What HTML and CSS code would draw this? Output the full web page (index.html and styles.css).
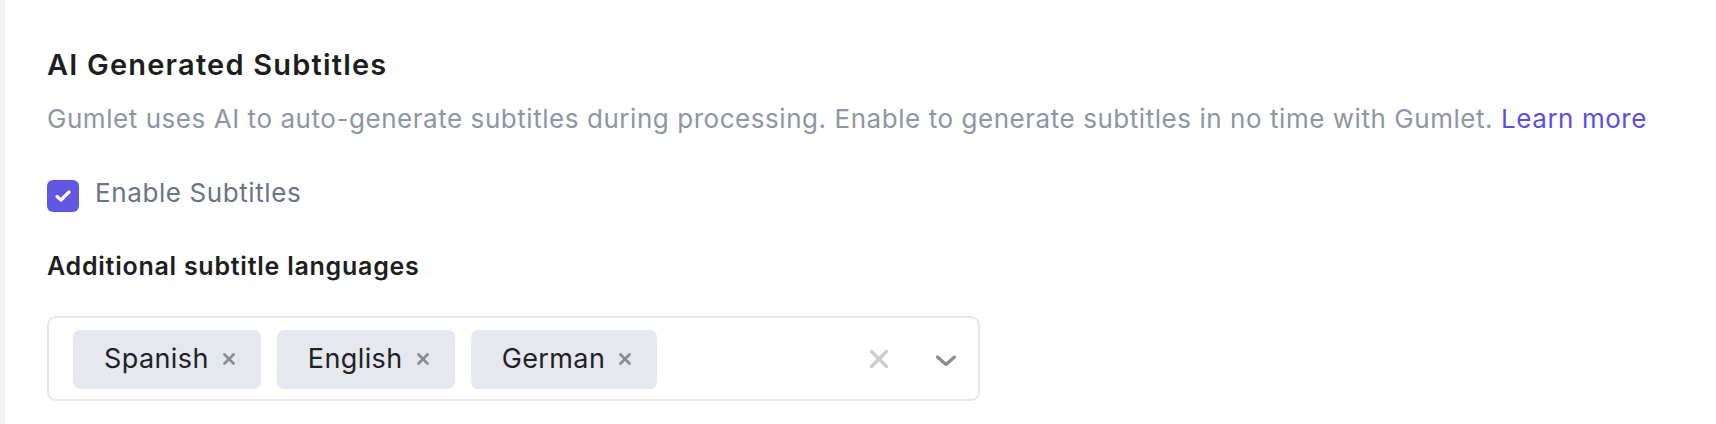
FILE: index.html
```html
<!DOCTYPE html>
<html lang="en">
<head>
<meta charset="utf-8">
<title>AI Generated Subtitles</title>
<link rel="stylesheet" href="styles.css">
</head>
<body>
<div class="page">
  <div class="rail"></div>
  <section class="panel">
    <h2 class="title">AI Generated Subtitles</h2>
    <p class="desc">Gumlet uses AI to auto-generate subtitles during processing. Enable to generate subtitles in no time with Gumlet. <a class="link" href="#">Learn more</a></p>
    <label class="check">
      <span class="box">
        <svg width="18" height="14" viewBox="0 0 18 14"><path d="M3 7.5 L7 11 L15 3" fill="none" stroke="#fff" stroke-width="3.2" stroke-linecap="round" stroke-linejoin="round"/></svg>
      </span>
      <span class="check-label">Enable Subtitles</span>
    </label>
    <h3 class="subhead">Additional subtitle languages</h3>
    <div class="select">
      <div class="values">
        <span class="chip"><span class="chip-text">Spanish</span><svg class="chip-x" width="14" height="14" viewBox="0 0 14 14"><path d="M2.5 2.5 L11.5 11.5 M11.5 2.5 L2.5 11.5" stroke="#8a8d92" stroke-width="2.8" stroke-linecap="round"/></svg></span>
        <span class="chip"><span class="chip-text">English</span><svg class="chip-x" width="14" height="14" viewBox="0 0 14 14"><path d="M2.5 2.5 L11.5 11.5 M11.5 2.5 L2.5 11.5" stroke="#8a8d92" stroke-width="2.8" stroke-linecap="round"/></svg></span>
        <span class="chip"><span class="chip-text">German</span><svg class="chip-x" width="14" height="14" viewBox="0 0 14 14"><path d="M2.5 2.5 L11.5 11.5 M11.5 2.5 L2.5 11.5" stroke="#8a8d92" stroke-width="2.8" stroke-linecap="round"/></svg></span>
      </div>
      <div class="indicators">
        <svg class="clear" width="20" height="20" viewBox="0 0 20 20"><path d="M2.5 2.5 L17.5 17.5 M17.5 2.5 L2.5 17.5" stroke="#cccccc" stroke-width="3.4" stroke-linecap="round"/></svg>
        <svg class="chev" width="22" height="14" viewBox="0 0 22 14"><path d="M2.5 3 L11 10.5 L19.5 3" fill="none" stroke="#8c8c8c" stroke-width="3.2" stroke-linecap="round" stroke-linejoin="round"/></svg>
      </div>
    </div>
  </section>
</div>
</body>
</html>
```

FILE: styles.css
```css
html, body {
  margin: 0;
  padding: 0;
  background: #ffffff;
}

body {
  font-family: Inter, "Noto Sans", "Liberation Sans", sans-serif;
}

.page {
  display: flex;
  min-height: 424px;
}

.rail {
  width: 4px;
  flex: 0 0 4px;
  background: #f3f4f7;
  border-right: 1px solid #eceef2;
}

.panel {
  flex: 1;
  padding: 49px 0 0 42px;
}

.title {
  margin: 0;
  font-size: 29px;
  line-height: 32px;
  font-weight: 600;
  color: #1d1e20;
  letter-spacing: 1.2px;
}

.desc {
  margin: 22px 0 0;
  font-size: 26px;
  line-height: 32px;
  font-weight: 400;
  color: #8d96a2;
  letter-spacing: 0.55px;
}

.link {
  color: #5b4ee6;
  text-decoration: none;
}

.check {
  display: flex;
  align-items: flex-start;
  gap: 16px;
  margin-top: 45px;
}

.box {
  width: 32px;
  height: 32px;
  border-radius: 6px;
  background: #6257e3;
  display: flex;
  align-items: center;
  justify-content: center;
  flex: 0 0 32px;
}

.check-label {
  font-size: 26px;
  line-height: 26px;
  color: #687585;
  letter-spacing: 0.6px;
}

.subhead {
  margin: 40px 0 0;
  font-size: 25px;
  line-height: 28px;
  font-weight: 600;
  color: #1d1e20;
  letter-spacing: 0.75px;
}

.select {
  margin-top: 36px;
  width: 933px;
  height: 85px;
  box-sizing: border-box;
  border: 2px solid #e5e7ef;
  border-radius: 9px;
  display: flex;
  align-items: center;
  padding: 1px 21px 0 24px;
}

.values {
  flex: 1;
  display: flex;
  gap: 16px;
}

.chip {
  display: flex;
  align-items: center;
  height: 59px;
  box-sizing: border-box;
  padding: 0 25px 0 31px;
  background: #e6e8f0;
  border-radius: 7px;
}

.chip-text {
  font-size: 27px;
  line-height: 30px;
  color: #1f2124;
  letter-spacing: 0.4px;
}

.chip-x {
  margin-left: 13px;
}

.indicators {
  display: flex;
  align-items: center;
  gap: 46px;
}

.chev {
  margin-top: 4px;
}
```
